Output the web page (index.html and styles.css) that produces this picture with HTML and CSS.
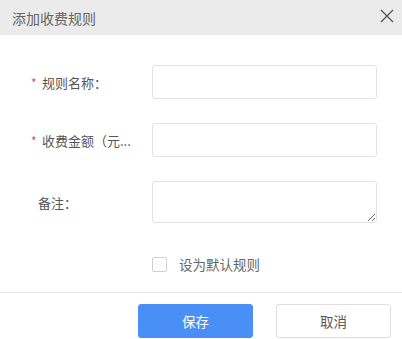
FILE: index.html
```html
<!DOCTYPE html>
<html lang="zh-CN">
<head>
	<meta charset="UTF-8">
	<title>添加收费规则</title>
	<link rel="stylesheet" href="styles.css">
</head>
<body>
	<div class="dialog">
		<div class="dialog-head">
			<span class="dialog-title">添加收费规则</span>
			<span class="dialog-close">
				<svg width="14" height="14" viewBox="0 0 14 14"><path d="M1 1L13 13M13 1L1 13" stroke="#555" stroke-width="1.3" fill="none"/></svg>
			</span>
		</div>
		<div class="dialog-body">
			<div class="form-row">
				<label class="form-label"><i class="req">*</i><span class="label-text">规则名称：</span></label>
				<input class="form-input" type="text">
			</div>
			<div class="form-row">
				<label class="form-label" title="收费金额（元）："><i class="req">*</i><span class="label-text">收费金额（元...</span></label>
				<input class="form-input" type="text">
			</div>
			<div class="form-row">
				<label class="form-label plain"><span class="label-text">备注：</span></label>
				<textarea class="form-input form-textarea"></textarea>
			</div>
			<div class="form-row check-row">
				<label class="check"><span class="check-box"></span><span class="check-text">设为默认规则</span></label>
			</div>
		</div>
		<div class="dialog-foot">
			<button class="btn btn-primary">保存</button>
			<button class="btn">取消</button>
		</div>
	</div>
</body>
</html>
```

FILE: styles.css
```css
*{margin:0;padding:0;box-sizing:border-box;}
body{
	background:#fff;
	font-family:"Noto Sans CJK SC","Noto Sans",sans-serif;
	overflow:hidden;
}
.dialog{
	width:402px;
	height:339px;
	background:#fff;
	overflow:hidden;
}
.dialog-head{
	height:35px;
	background:#ebebeb;
	display:flex;
	align-items:center;
	justify-content:space-between;
	padding:0 8px 0 12px;
}
.dialog-title{
	font-size:14px;
	color:#666;
	line-height:1;
}
.dialog-close{
	display:flex;
	width:14px;
	height:14px;
	margin-top:-4px;
}
.dialog-body{
	padding:30px 25px 11px 0;
}
.form-row{
	display:flex;
	align-items:center;
	margin-bottom:24px;
}
.form-row:last-child{margin-bottom:0;}
.form-label{
	width:152px;
	padding:0 10px 0 31px;
	display:flex;
	align-items:center;
	font-size:13px;
	color:#555;
	white-space:nowrap;
}
.form-label.plain{padding-left:38px;}
.req{
	font-style:normal;
	color:#f0445a;
	width:11px;
	font-size:12px;
	flex:none;
}
.form-input{
	flex:1;
	height:34px;
	border:1px solid #e2e2e2;
	border-radius:3px;
	outline:none;
	background:#fff;
}
.form-textarea{
	height:42px;
	resize:both;
	font-family:inherit;
}
.check-row{
	height:34px;
	padding-left:152px;
}
.check{
	display:flex;
	align-items:center;
	font-size:13.5px;
	color:#666;
}
.check-box{
	width:15px;
	height:15px;
	border:1px solid #cfcfcf;
	border-radius:2px;
	margin-right:12px;
}
.dialog-foot{
	border-top:1px solid #e8e8e8;
	display:flex;
	justify-content:flex-end;
	gap:23px;
	padding:11px 11px 0 0;
}
.btn{
	width:115px;
	height:34px;
	border:1px solid #dedede;
	border-radius:3px;
	background:#fff;
	color:#555;
	font-family:inherit;
	font-size:13.5px;
}
.btn-primary{
	background:#4a8ff5;
	border-color:#4a8ff5;
	color:#fff;
}
```
